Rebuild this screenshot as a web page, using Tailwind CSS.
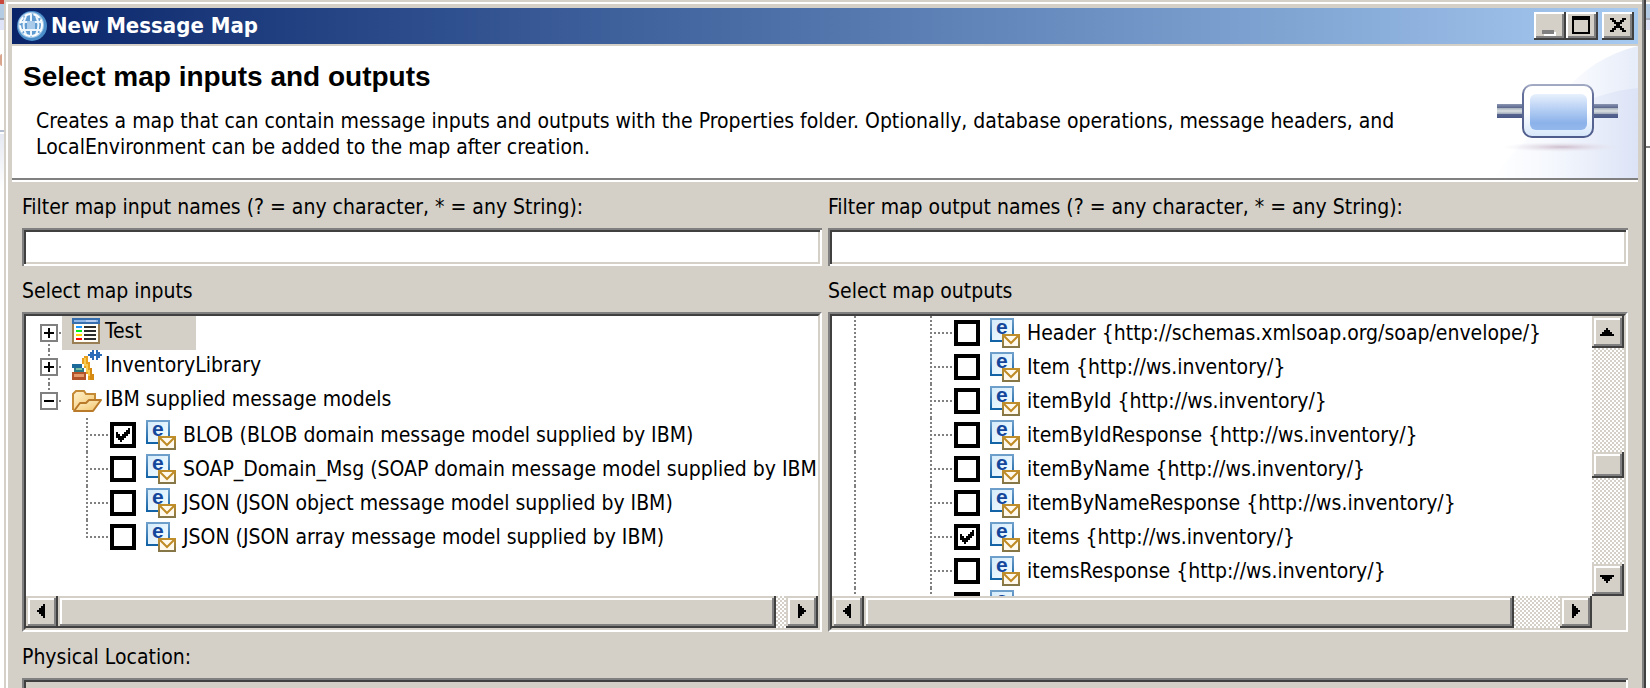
<!DOCTYPE html>
<html lang="en">
<head>
<meta charset="utf-8">
<title>New Message Map</title>
<script src="https://cdn.jsdelivr.net/npm/@tailwindcss/browser@4"></script>
</head>
<body class="h-screen overflow-hidden bg-white font-['DejaVu_Sans_Condensed','DejaVu_Sans',sans-serif] text-[21px] leading-[26px] text-black">

<svg class="absolute size-0" aria-hidden="true">
  <defs>
    <linearGradient id="page-edge" x1="0" y1="0" x2="0" y2="1"><stop offset="0" stop-color="#6f9fcb"/><stop offset="1" stop-color="#1262a6"/></linearGradient>
    <linearGradient id="page-fill" x1="0" y1="0" x2="1" y2="1"><stop offset="0" stop-color="#d3ebfb"/><stop offset="1" stop-color="#f6fcff"/></linearGradient>
    <linearGradient id="mail-edge" x1="0" y1="0" x2="0" y2="1"><stop offset="0" stop-color="#c08f2c"/><stop offset="1" stop-color="#857648"/></linearGradient>
    <linearGradient id="folder-fill" x1="0" y1="0" x2="1" y2="1"><stop offset="0" stop-color="#fff3cf"/><stop offset="1" stop-color="#f3c468"/></linearGradient>
  </defs>
  <symbol id="message" viewBox="0 0 30 30">
    <rect x="1" y="1" width="22" height="22" fill="url(#page-fill)" stroke="url(#page-edge)" stroke-width="2"/>
    <text x="6" y="16" font-family="Liberation Sans, sans-serif" font-weight="700" font-size="21" fill="#14479b">e</text>
    <rect x="13" y="17" width="16" height="12" fill="#fff9ee" stroke="url(#mail-edge)" stroke-width="2"/>
    <path d="M14 18l7 7 7-7" fill="none" stroke="#bf8b26" stroke-width="2"/>
  </symbol>
  <symbol id="left" viewBox="0 0 8 14"><path d="M8 0v14H6v-2H4v-2H2V8H0V6h2V4h2V2h2V0z"/></symbol>
  <symbol id="right" viewBox="0 0 8 14"><path d="M0 0v14h2v-2h2v-2h2V8h2V6H6V4H4V2H2V0z"/></symbol>
  <symbol id="up" viewBox="0 0 14 8"><path d="M0 8h14V6h-2V4h-2V2H8V0H6v2H4v2H2v2H0z"/></symbol>
  <symbol id="down" viewBox="0 0 14 8"><path d="M0 0h14v2h-2v2h-2v2H8v2H6V6H4V4H2V2H0z"/></symbol>
  <symbol id="tick" viewBox="0 0 14 14"><path d="M0 4h2v2h2v2h2V6h2V4h2V2h2V0h2v6h-2v2h-2v2H8v2H6v2H4v-2H2v-2H0z"/></symbol>
</svg>

<div class="flex h-full">
  <div class="flex w-1 shrink-0 flex-col bg-white" aria-hidden="true">
    <div class="h-1 bg-[#c9473a]"></div>
    <div class="h-[14px] bg-[#b4cbe4]"></div>
    <div class="h-[2px] bg-[#a5aab8]"></div>
    <div class="h-[10px] bg-[#dfe4f8]"></div>
    <div class="mt-6 h-3 w-[2px] rounded-l bg-[#d9a58c]"></div>
    <div class="mt-[64px] h-[2px] bg-[#b4bccf]"></div>
    <div class="mt-[2px] flex-1 bg-linear-to-b from-[#e6e9f2] to-white to-10%"></div>
  </div>

  <main class="flex min-w-0 flex-1 flex-col bg-[#d4d0c8] px-2 pt-2 shadow-[inset_-2px_0_#404040,inset_-4px_0_#808080,inset_2px_2px_#d4d0c8,inset_4px_4px_#fff]">
    <header class="flex h-9 shrink-0 items-center bg-linear-to-r from-[#0a246a] to-[#a6caf0] pr-1 pl-1">
      <svg class="size-8 shrink-0" viewBox="0 0 32 32" aria-hidden="true">
        <circle cx="16" cy="16" r="15" fill="#4d8fca"/>
        <circle cx="15" cy="15" r="13" fill="#a5cae8"/>
        <circle cx="15" cy="15" r="11" fill="#5f9bd1" stroke="#fff" stroke-width="2" stroke-dasharray="7 2"/>
        <path d="M10 6c-3 6-3 13 0 18M20 6c3 6 3 13 0 18M5 12h21M5 20h21M15 4v22" fill="none" stroke="#eef6fd" stroke-width="2"/>
        <rect x="11" y="11" width="8" height="8" fill="#a9cbe9"/>
      </svg>
      <h1 class="ml-[3px] flex-1 text-[22px] font-bold text-white">New Message Map</h1>
      <div class="flex">
        <button aria-label="Minimize" class="flex h-7 w-8 items-end justify-start bg-[#d4d0c8] pb-1 pl-2 shadow-[inset_-2px_-2px_#404040,inset_2px_2px_#fff,inset_-4px_-4px_#808080]">
          <svg class="h-[8px] w-4" viewBox="0 0 16 8"><path d="M2 4h12v4H2z" fill="#fff"/><path d="M0 2h12v4H0z" fill="#808080"/></svg>
        </button>
        <button aria-label="Maximize" class="flex h-7 w-8 items-center justify-center bg-[#d4d0c8] pb-[2px] pr-[2px] shadow-[inset_-2px_-2px_#404040,inset_2px_2px_#fff,inset_-4px_-4px_#808080]">
          <svg class="h-[18px] w-[18px]" viewBox="0 0 18 18"><path d="M0 0h18v18H0zM2 4v12h14V4z" fill-rule="evenodd"/></svg>
        </button>
        <button aria-label="Close" class="ml-1 flex h-7 w-8 items-center justify-center bg-[#d4d0c8] pb-[2px] shadow-[inset_-2px_-2px_#404040,inset_2px_2px_#fff,inset_-4px_-4px_#808080]">
          <svg class="h-[14px] w-4" viewBox="0 0 16 14"><path d="M0 0h4v2h2v2h4V2h2V0h4v2h-2v2h-2v2h-2v2h2v2h2v2h2v2h-4v-2h-2v-2H6v2H4v2H0v-2h2v-2h2V8h2V6H4V4H2V2H0z"/></svg>
        </button>
      </div>
    </header>

    <section class="mt-[2px] flex h-[134px] shrink-0 justify-between border-b-2 border-[#808080] bg-white pl-[11px]">
      <div class="pt-[15px]">
        <h2 class="font-['Liberation_Sans',sans-serif] text-[28px] leading-8 font-bold">Select map inputs and outputs</h2>
        <p class="mt-[15px] pl-[13px]">Creates a map that can contain message inputs and outputs with the Properties folder. Optionally, database operations, message headers, and LocalEnvironment can be added to the map after creation.</p>
      </div>
      <svg class="h-[132px] w-[148px] shrink-0" viewBox="0 0 148 132" aria-hidden="true">
        <defs>
          <linearGradient id="sweep" x1="0" y1="0" x2="1" y2="0"><stop offset="0" stop-color="#fff"/><stop offset=".4" stop-color="#f5f8fd"/><stop offset="1" stop-color="#dce3f6"/></linearGradient>
          <linearGradient id="sweep2" x1="0" y1="0" x2="1" y2="0"><stop offset="0" stop-color="#fff"/><stop offset=".5" stop-color="#fcfdff"/><stop offset="1" stop-color="#e6ecf9"/></linearGradient>
          <linearGradient id="pipe" x1="0" y1="0" x2="0" y2="1"><stop offset="0" stop-color="#8b95b3"/><stop offset=".28" stop-color="#5a678c"/><stop offset=".3" stop-color="#a9b3bf"/><stop offset=".5" stop-color="#dbe1e2"/><stop offset=".7" stop-color="#a2abbd"/><stop offset=".75" stop-color="#56648d"/><stop offset="1" stop-color="#4a5888"/></linearGradient>
          <linearGradient id="node" x1="0" y1="0" x2="0" y2="1"><stop offset="0" stop-color="#e8f1fd"/><stop offset=".45" stop-color="#b3cdf3"/><stop offset=".8" stop-color="#8bb2ea"/><stop offset="1" stop-color="#93b8ec"/></linearGradient>
          <linearGradient id="rim" x1="0" y1="0" x2="0" y2="1"><stop offset="0" stop-color="#fff"/><stop offset=".5" stop-color="#fff"/><stop offset="1" stop-color="#d5e6fa"/></linearGradient>
          <linearGradient id="rim-edge" x1="0" y1="0" x2="0" y2="1"><stop offset="0" stop-color="#a3abc4"/><stop offset=".15" stop-color="#66729b"/><stop offset="1" stop-color="#4f5d8c"/></linearGradient>
          <radialGradient id="drop"><stop offset="0" stop-color="#cdbccb"/><stop offset="1" stop-color="#e8e4ee" stop-opacity="0"/></radialGradient>
        </defs>
        <path d="M148 0C116 8 92 24 74 46L0 132h148z" fill="url(#sweep2)"/>
        <path d="M148 42C90 48 40 80 4 132h144z" fill="url(#sweep)"/>
        <path d="M7 58h121v14H7z" fill="url(#pipe)"/>
        <ellipse cx="72" cy="101" rx="60" ry="5" fill="url(#drop)"/>
        <rect x="33" y="39" width="70" height="52" rx="9" fill="url(#rim)" stroke="url(#rim-edge)" stroke-width="2"/>
        <rect x="40" y="48" width="57" height="36" rx="6" fill="url(#node)"/>
      </svg>
    </section>
    <div class="h-[2px] shrink-0 bg-white"></div>

    <form class="px-[10px]">
      <div class="grid grid-cols-2 gap-x-[6px]">
        <section class="min-w-0">
          <label for="filter-in" class="flex h-[46px] items-center pt-[3px]">Filter map input names (? = any character, * = any String):</label>
          <input id="filter-in" type="text" class="block h-[38px] w-full bg-white px-2 outline-none shadow-[inset_2px_2px_#808080,inset_-2px_-2px_#fff,inset_4px_4px_#404040,inset_-4px_-4px_#d4d0c8]">
          <h3 class="flex h-[46px] items-center pt-[3px]">Select map inputs</h3>
          <div class="h-80 border-2 border-t-[#808080] border-r-white border-b-white border-l-[#808080]">
            <div class="flex h-full flex-col border-2 border-t-[#404040] border-r-[#d4d0c8] border-b-[#d4d0c8] border-l-[#404040] bg-white">
              <ul class="flex-1 overflow-hidden whitespace-nowrap">
                <li class="flex h-[34px] items-center pl-[14px]">
                  <div class="flex h-full w-[18px] flex-col items-center">
                    <div class="flex-1"></div>
                    <button type="button" aria-label="Expand Test" class="size-[18px] border-2 border-[#808080] bg-white"><svg class="size-[14px]" viewBox="0 0 14 14"><path d="M2 6h4V2h2v4h4v2H8v4H6V8H2z"/></svg></button>
                    <div class="w-[2px] flex-1 bg-[repeating-linear-gradient(180deg,transparent_0_2px,#808080_2px_4px)]"></div>
                  </div>
                  <div class="mx-[1px] size-[2px] bg-[#808080]"></div>
                  <div class="flex h-full w-[134px] items-center bg-[#d4d0c8] pb-1 pl-[10px]">
                    <svg class="size-[30px]" viewBox="0 0 30 30" aria-hidden="true">
                      <path d="M0 2h28v26H0z" fill="#9a7f55"/><path d="M2 8h24v18H2z" fill="#fffdf6"/>
                      <path d="M0 2h28v6H0z" fill="#376fae"/><path d="M2 4h24v2H2z" fill="#8fb6e4"/><path d="M14 4h10v2H14z" fill="#b9cdf0"/>
                      <path d="M4 10h6v2H4z" fill="#1494ff"/><path d="M4 14h6v2H4z" fill="#00f01e"/><path d="M4 18h6v2H4z" fill="#ffd800"/><path d="M4 22h6v2H4z" fill="#f00"/>
                      <path d="M12 10h12v2H12zM12 14h12v2H12zM12 18h12v2H12zM12 22h12v2H12z" fill="#2b2b2b"/>
                    </svg>
                    <span class="ml-[3px]">Test</span>
                  </div>
                </li>
                <li class="flex h-[34px] items-center pl-[14px]">
                  <div class="flex h-full w-[18px] flex-col items-center">
                    <div class="w-[2px] flex-1 bg-[repeating-linear-gradient(180deg,#808080_0_2px,transparent_2px_4px)]"></div>
                    <button type="button" aria-label="Expand InventoryLibrary" class="size-[18px] border-2 border-[#808080] bg-white"><svg class="size-[14px]" viewBox="0 0 14 14"><path d="M2 6h4V2h2v4h4v2H8v4H6V8H2z"/></svg></button>
                    <div class="w-[2px] flex-1 bg-[repeating-linear-gradient(180deg,transparent_0_2px,#808080_2px_4px)]"></div>
                  </div>
                  <div class="mx-[1px] size-[2px] bg-[#808080]"></div>
                  <div class="flex h-full items-center pb-1 pl-[10px]">
                    <svg class="size-[30px]" viewBox="0 0 30 30" aria-hidden="true">
                      <path d="M12 6h4v6h2v6h2v6h2v6h-6v-6h-2v-6h-2v-4h-2v-6h2z" fill="#e8a01c"/>
                      <path d="M12 8h2v6h2v6h2v6h-2v-4h-2v-6h-2z" fill="#f9cc50"/>
                      <path d="M18 18h2v6h2v6h-4z" fill="#d58a12"/>
                      <path d="M0 14h10v4H0z" fill="#1b6a99"/><path d="M2 18h10v4H2z" fill="#2b7a86"/><path d="M4 18h6v2H4z" fill="#7fc0a0"/>
                      <path d="M0 22h14v8H0z" fill="#b2532a"/><path d="M2 24h10v3H2z" fill="#e59a6c"/>
                      <path d="M16 4h2V2h2V0h2v4h2V0h2v2h2v2h2v2h-2v2h-2v2h-2V6h-2v4h-2V8h-2V6h-2z" fill="#2b6cb8"/>
                    </svg>
                    <span class="ml-[3px]">InventoryLibrary</span>
                  </div>
                </li>
                <li>
                  <div class="flex h-[34px] items-center pl-[14px]">
                    <div class="flex h-full w-[18px] flex-col items-center">
                      <div class="w-[2px] flex-1 bg-[repeating-linear-gradient(180deg,#808080_0_2px,transparent_2px_4px)]"></div>
                      <button type="button" aria-label="Collapse IBM supplied message models" class="size-[18px] border-2 border-[#808080] bg-white"><svg class="size-[14px]" viewBox="0 0 14 14"><path d="M2 6h10v2H2z"/></svg></button>
                      <div class="flex-1"></div>
                    </div>
                    <div class="mx-[1px] size-[2px] bg-[#808080]"></div>
                    <div class="flex h-full items-center pb-1 pl-[10px]">
                      <svg class="size-[30px]" viewBox="0 0 30 30" aria-hidden="true">
                        <path d="M1 26V10l3-3h8l2 3h9v6" fill="url(#folder-fill)" stroke="#c58a35" stroke-width="2"/>
                        <path d="M2 27l6-8h6l3-3h12l-8 11z" fill="url(#folder-fill)" stroke="#b97a2a" stroke-width="2" stroke-linejoin="round"/>
                      </svg>
                      <span class="ml-[3px]">IBM supplied message models</span>
                    </div>
                  </div>
                  <ul id="inputs"></ul>
                </li>
              </ul>
              <div class="flex h-8 shrink-0 bg-[repeating-conic-gradient(#d4d0c8_0_25%,#fff_0_50%)] bg-size-[4px_4px]">
                <button type="button" aria-label="Scroll left" class="flex w-8 items-center justify-center bg-[#d4d0c8] pr-[2px] pb-[2px] shadow-[inset_-2px_-2px_#404040,inset_2px_2px_#d4d0c8,inset_-4px_-4px_#808080,inset_4px_4px_#fff]"><svg class="h-[14px] w-2"><use href="#left"/></svg></button>
                <div class="mr-[10px] flex-1 bg-[#d4d0c8] shadow-[inset_-2px_-2px_#404040,inset_2px_2px_#d4d0c8,inset_-4px_-4px_#808080,inset_4px_4px_#fff]"></div>
                <button type="button" aria-label="Scroll right" class="flex w-8 items-center justify-center bg-[#d4d0c8] pb-[2px] shadow-[inset_-2px_-2px_#404040,inset_2px_2px_#d4d0c8,inset_-4px_-4px_#808080,inset_4px_4px_#fff]"><svg class="h-[14px] w-2"><use href="#right"/></svg></button>
              </div>
            </div>
          </div>
        </section>

        <section class="min-w-0">
          <label for="filter-out" class="flex h-[46px] items-center pt-[3px]">Filter map output names (? = any character, * = any String):</label>
          <input id="filter-out" type="text" class="block h-[38px] w-full bg-white px-2 outline-none shadow-[inset_2px_2px_#808080,inset_-2px_-2px_#fff,inset_4px_4px_#404040,inset_-4px_-4px_#d4d0c8]">
          <h3 class="flex h-[46px] items-center pt-[3px]">Select map outputs</h3>
          <div class="h-80 border-2 border-t-[#808080] border-r-white border-b-white border-l-[#808080]">
            <div class="grid h-full grid-cols-[1fr_32px] grid-rows-[280px_32px] border-2 border-t-[#404040] border-r-[#d4d0c8] border-b-[#d4d0c8] border-l-[#404040] bg-[#d4d0c8]">
              <ul id="outputs" class="min-w-0 overflow-hidden bg-white whitespace-nowrap"></ul>
              <div class="flex flex-col bg-[repeating-conic-gradient(#d4d0c8_0_25%,#fff_0_50%)] bg-size-[4px_4px]">
                <button type="button" aria-label="Scroll up" class="flex h-8 items-center justify-center bg-[#d4d0c8] pr-[2px] shadow-[inset_-2px_-2px_#404040,inset_2px_2px_#d4d0c8,inset_-4px_-4px_#808080,inset_4px_4px_#fff]"><svg class="h-2 w-[14px]"><use href="#up"/></svg></button>
                <div class="mt-[104px] h-[26px] bg-[#d4d0c8] shadow-[inset_-2px_-2px_#404040,inset_2px_2px_#d4d0c8,inset_-4px_-4px_#808080,inset_4px_4px_#fff]"></div>
                <button type="button" aria-label="Scroll down" class="mt-auto flex h-8 items-center justify-center bg-[#d4d0c8] pr-[2px] pb-[2px] shadow-[inset_-2px_-2px_#404040,inset_2px_2px_#d4d0c8,inset_-4px_-4px_#808080,inset_4px_4px_#fff]"><svg class="h-2 w-[14px]"><use href="#down"/></svg></button>
              </div>
              <div class="flex bg-[repeating-conic-gradient(#d4d0c8_0_25%,#fff_0_50%)] bg-size-[4px_4px]">
                <button type="button" aria-label="Scroll left" class="flex w-8 items-center justify-center bg-[#d4d0c8] pr-[2px] pb-[2px] shadow-[inset_-2px_-2px_#404040,inset_2px_2px_#d4d0c8,inset_-4px_-4px_#808080,inset_4px_4px_#fff]"><svg class="h-[14px] w-2"><use href="#left"/></svg></button>
                <div class="mr-[46px] flex-1 bg-[#d4d0c8] shadow-[inset_-2px_-2px_#404040,inset_2px_2px_#d4d0c8,inset_-4px_-4px_#808080,inset_4px_4px_#fff]"></div>
                <button type="button" aria-label="Scroll right" class="flex w-8 items-center justify-center bg-[#d4d0c8] pb-[2px] shadow-[inset_-2px_-2px_#404040,inset_2px_2px_#d4d0c8,inset_-4px_-4px_#808080,inset_4px_4px_#fff]"><svg class="h-[14px] w-2"><use href="#right"/></svg></button>
              </div>
            </div>
          </div>
        </section>
      </div>

      <label for="location" class="flex h-[46px] items-center pt-[3px]">Physical Location:</label>
      <input id="location" type="text" readonly class="block h-[38px] w-full bg-[#d4d0c8] px-2 outline-none shadow-[inset_2px_2px_#808080,inset_-2px_-2px_#fff,inset_4px_4px_#404040,inset_-4px_-4px_#d4d0c8]">
    </form>
  </main>

  <div class="flex w-1 shrink-0 flex-col bg-white" aria-hidden="true">
    <div class="h-[2px] bg-[#d4d0c8]"></div>
    <div class="mt-[2px] h-[14px] bg-[#b4cbe4]"></div>
    <div class="h-[2px] bg-[#a5aab8]"></div>
    <div class="h-[10px] bg-[#dfe4f8]"></div>
    <div class="mt-[116px] h-[2px] bg-[#808080]"></div>
  </div>
</div>

<!-- One row of a message list; the branch lines before it depend on the tree depth -->
<template id="input-row">
  <li class="group flex h-[34px] items-center pl-[60px]">
    <div class="h-full w-[2px] shrink-0 self-start bg-[repeating-linear-gradient(180deg,#808080_0_2px,transparent_2px_4px)] group-last:h-[18px]"></div>
    <div class="ml-[2px] h-[2px] w-5 shrink-0 bg-[repeating-linear-gradient(90deg,#808080_0_2px,transparent_2px_4px)]"></div>
    <label class="relative flex items-center"><input type="checkbox" class="peer size-[26px] shrink-0 appearance-none border-4 border-black bg-white"><svg class="absolute left-[6px] hidden size-[14px] peer-checked:block"><use href="#tick"/></svg><svg class="mr-[7px] ml-[10px] size-[30px] shrink-0"><use href="#message"/></svg><span></span></label>
  </li>
</template>
<template id="output-row">
  <li class="flex h-[34px] items-center pl-[22px]">
    <div class="h-full w-[2px] shrink-0 bg-[repeating-linear-gradient(180deg,#808080_0_2px,transparent_2px_4px)]"></div>
    <div class="ml-[74px] h-full w-[2px] shrink-0 bg-[repeating-linear-gradient(180deg,#808080_0_2px,transparent_2px_4px)]"></div>
    <div class="ml-[2px] h-[2px] w-5 shrink-0 bg-[repeating-linear-gradient(90deg,#808080_0_2px,transparent_2px_4px)]"></div>
    <label class="relative flex items-center"><input type="checkbox" class="peer size-[26px] shrink-0 appearance-none border-4 border-black bg-white"><svg class="absolute left-[6px] hidden size-[14px] peer-checked:block"><use href="#tick"/></svg><svg class="mr-[7px] ml-[10px] size-[30px] shrink-0"><use href="#message"/></svg><span></span></label>
  </li>
</template>
<script>
function fill(listId, templateId, names, checked) {
  const list = document.getElementById(listId);
  const row = document.getElementById(templateId).content;
  names.forEach((name, i) => {
    const item = row.cloneNode(true);
    item.querySelector('span').textContent = name;
    item.querySelector('input').checked = i === checked;
    list.append(item);
  });
}
fill('inputs', 'input-row', [
  'BLOB (BLOB domain message model supplied by IBM)',
  'SOAP_Domain_Msg (SOAP domain message model supplied by IBM)',
  'JSON (JSON object message model supplied by IBM)',
  'JSON (JSON array message model supplied by IBM)'
], 0);
fill('outputs', 'output-row', [
  'Header {http://schemas.xmlsoap.org/soap/envelope/}',
  'Item {http://ws.inventory/}',
  'itemById {http://ws.inventory/}',
  'itemByIdResponse {http://ws.inventory/}',
  'itemByName {http://ws.inventory/}',
  'itemByNameResponse {http://ws.inventory/}',
  'items {http://ws.inventory/}',
  'itemsResponse {http://ws.inventory/}',
  'message {http://ws.inventory/}'
], 6);
</script>
</body>
</html>
